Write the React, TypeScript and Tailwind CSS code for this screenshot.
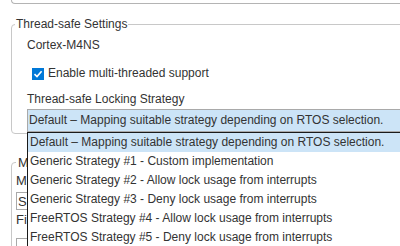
const STRATEGIES = [
  'Default – Mapping suitable strategy depending on RTOS selection.',
  'Generic Strategy #1 - Custom implementation',
  'Generic Strategy #2 - Allow lock usage from interrupts',
  'Generic Strategy #3 - Deny lock usage from interrupts',
  'FreeRTOS Strategy #4 - Allow lock usage from interrupts',
  'FreeRTOS Strategy #5 - Deny lock usage from interrupts',
]

function CheckBox() {
  return (
    <span className="w-[12px] h-[12px] bg-[#0078d7] border border-[#0078d7] flex items-center justify-center">
      <svg width="10" height="10" viewBox="0 0 10 10">
        <path d="M1.5 5.2 L4 7.6 L8.6 2.2" fill="none" stroke="#fff" strokeWidth="1.6" />
      </svg>
    </span>
  )
}

export default function App() {
  return (
    <div className="relative w-[400px] h-[246px] overflow-hidden bg-white text-[#333] text-[12px] leading-[15px] font-['Liberation_Sans',Arial,sans-serif]">
      {/* bottom of the previous section */}
      <div className="ml-[11px] mr-[-10px] h-[4px] border-l border-b border-[#b4b4b4] rounded-bl-[4px]" />

      <fieldset className="mt-[13px] ml-[11px] mr-[-10px] border border-[#c8c8c8] rounded-[4px] pl-[15px] pb-[1px]">
        <legend className="ml-[-12px] px-[1px]">Thread-safe Settings</legend>
        <div className="mt-[6px]">Cortex-M4NS</div>
        <div className="mt-[13px] ml-[5px] flex items-center gap-[4px] h-[15px]">
          <CheckBox />
          <span>Enable multi-threaded support</span>
        </div>
        <div className="mt-[11px]">Thread-safe Locking Strategy</div>
        <div className="mt-[2px] h-[23px] border border-[#a9a9a9] bg-[#cce4f7] pl-[1px] flex items-center whitespace-nowrap">
          {STRATEGIES[0]}
        </div>
      </fieldset>

      <fieldset className="mt-[21px] ml-[11px] mr-[-10px] border border-[#c8c8c8] rounded-[4px] pl-[4px] pb-[4px] text-[13px]">
        <legend className="ml-0 px-[2px]">M</legend>
        <div className="mt-[3px]">M</div>
        <div className="mt-[4px] h-[18px] w-[200px] border border-[#a9a9a9] pl-[1px] flex items-center">S</div>
        <div className="mt-[2px]">Fi</div>
        <div className="mt-[11px] h-[18px] w-[200px] border border-[#a9a9a9]" />
      </fieldset>

      {/* open dropdown list */}
      <div className="absolute top-[132px] left-[27px] right-[-10px] bottom-[-10px] bg-white border border-[#1a1a1a]">
        {STRATEGIES.map((s, i) => (
          <div
            key={s}
            className={`h-[19px] pl-[2px] flex items-center whitespace-nowrap ${i === 0 ? 'bg-[#cce4f7]' : ''}`}
          >
            {s}
          </div>
        ))}
      </div>
    </div>
  )
}
